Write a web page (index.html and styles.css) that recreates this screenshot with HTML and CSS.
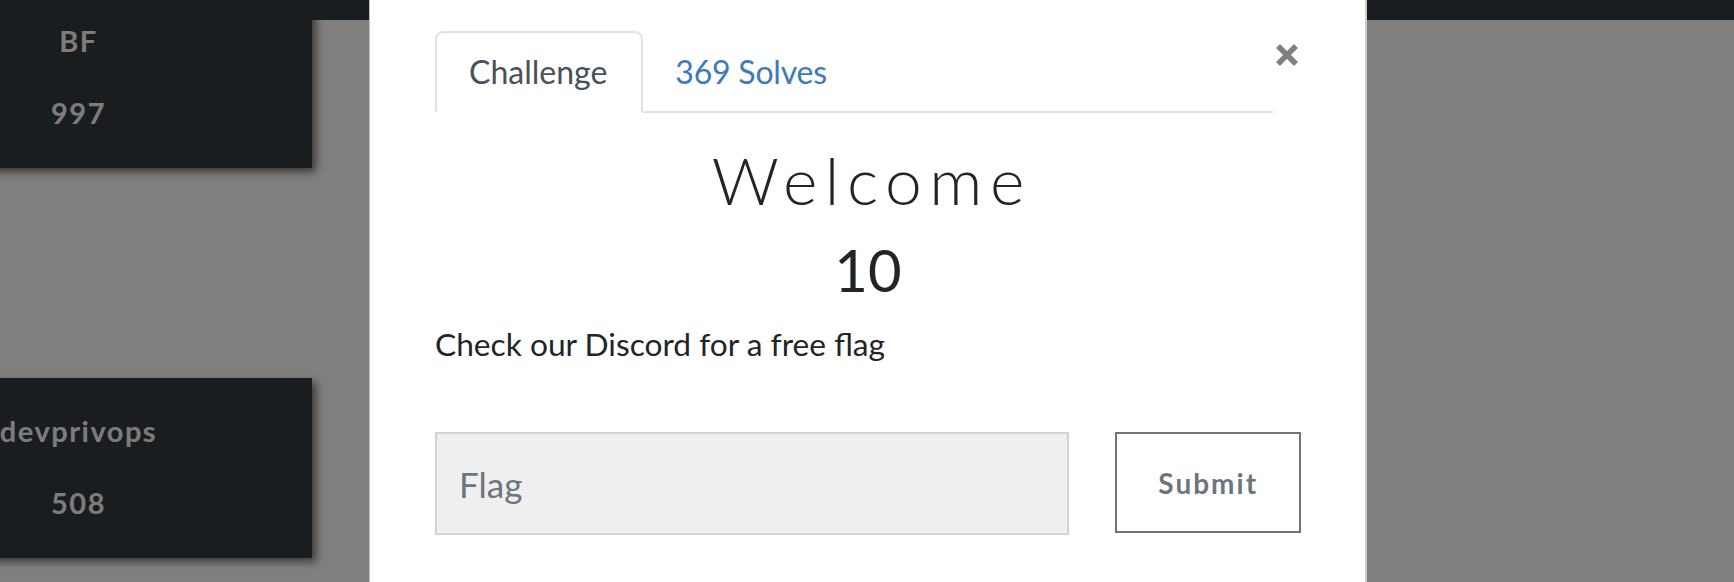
FILE: index.html
```html
<!DOCTYPE html>
<html lang="en">
<head>
<meta charset="utf-8">
<title>Challenge</title>
<link rel="stylesheet" href="styles.css">
</head>
<body>
  <header class="topbar"></header>
  <main class="board">
    <div class="team-card">
      <div class="team-name">BF</div>
      <div class="team-score">997</div>
    </div>
    <div class="team-card">
      <div class="team-name">devprivops</div>
      <div class="team-score">508</div>
    </div>
  </main>

  <div class="backdrop"></div>

  <div class="modal">
    <div class="modal-head">
      <ul class="tabs">
        <li class="tab active">Challenge</li>
        <li class="tab link">369 Solves</li>
      </ul>
      <button class="close" type="button" aria-label="Close">
        <svg width="22" height="22" viewBox="0 0 22 22">
          <path d="M2 2 L20 20 M20 2 L2 20" stroke="#7f7f7f" stroke-width="5.6" fill="none"/>
        </svg>
      </button>
    </div>
    <h2 class="chal-name">Welcome</h2>
    <h4 class="chal-value">10</h4>
    <p class="chal-desc">Check our Discord for a free flag</p>
    <form class="flag-form">
      <input class="flag-input" type="text" placeholder="Flag">
      <button class="submit" type="button">Submit</button>
    </form>
  </div>
</body>
</html>
```

FILE: styles.css
```css
html, body {
  margin: 0;
  padding: 0;
  height: 100%;
  overflow: hidden;
}

body {
  background: #ffffff;
  font-family: "Lato", "Liberation Sans", sans-serif;
  color: #212529;
}

.topbar {
  position: relative;
  z-index: 2;
  height: 20px;
  background: #343a40;
}

.board {
  display: flex;
  flex-direction: column;
  gap: 210px;
  margin-top: -32px;
}

.team-card {
  margin-left: -155px;
  width: 467px;
  height: 180px;
  box-sizing: border-box;
  padding-top: 35px;
  background: #343a40;
  box-shadow: 4px 4px 8px rgba(0, 0, 0, 0.55);
  display: flex;
  flex-direction: column;
  align-items: center;
  gap: 36px;
  color: #f8f9fa;
  font-weight: 700;
  font-size: 29px;
  line-height: 36px;
  letter-spacing: 1.5px;
}

.backdrop {
  position: fixed;
  inset: 0;
  background: rgba(0, 0, 0, 0.5);
  z-index: 5;
}

.modal {
  position: fixed;
  z-index: 6;
  top: 0;
  left: 369px;
  bottom: 0;
  width: 998px;
  box-sizing: border-box;
  background: #ffffff;
  border-left: 1px solid rgba(0, 0, 0, 0.25);
  border-right: 2px solid rgba(0, 0, 0, 0.2);
  padding: 31px 64px 0 65px;
}

.modal-head {
  display: flex;
  align-items: flex-start;
}

.tabs {
  flex: 1;
  display: flex;
  margin: 0;
  padding: 0;
  list-style: none;
  border-bottom: 2px solid #dee2e6;
}

.tab {
  padding: 15px 32px 15px 32px;
  margin-bottom: -2px;
  font-size: 32px;
  line-height: 48px;
  border: 2px solid transparent;
  border-radius: 8px 8px 0 0;
}

.tab.active {
  color: #495057;
  border-color: #dee2e6 #dee2e6 #ffffff;
  background: #ffffff;
  padding-right: 34px;
}

.tab.link {
  color: #3e79ba;
  padding-left: 30px;
  letter-spacing: -0.2px;
}

.close {
  width: 28px;
  height: 36px;
  margin-top: 6px;
  padding: 0;
  border: 0;
  background: transparent;
  display: flex;
  align-items: center;
  justify-content: center;
}

.chal-name {
  margin: 28px 0 0;
  text-align: center;
  font-weight: 300;
  font-size: 66px;
  line-height: 78px;
  letter-spacing: 7.5px;
  text-indent: 7.5px;
  color: #212529;
}

.chal-value {
  margin: 15px 0 0;
  text-align: center;
  font-weight: 400;
  font-size: 58px;
  line-height: 72px;
  color: #212529;
}

.chal-desc {
  margin: 15px 0 0;
  font-size: 31.7px;
  line-height: 46px;
  color: #212529;
}

.flag-form {
  display: flex;
  align-items: flex-start;
  gap: 46px;
  margin-top: 65px;
}

.flag-input {
  width: 636px;
  height: 103px;
  box-sizing: border-box;
  border: 2px solid #d0d4d9;
  background: #efefef;
  padding: 0 0 0 22px;
  font-family: "Lato", "Liberation Sans", sans-serif;
  font-size: 35px;
  color: #495057;
  outline: none;
}

.flag-input::placeholder {
  color: #6c757d;
  opacity: 1;
}

.submit {
  width: 186px;
  height: 101px;
  box-sizing: border-box;
  border: 2px solid #6c757d;
  background: #ffffff;
  font-family: "Lato", "Liberation Sans", sans-serif;
  font-weight: 700;
  font-size: 28px;
  letter-spacing: 2px;
  color: #6c757d;
  padding: 0;
}
```
